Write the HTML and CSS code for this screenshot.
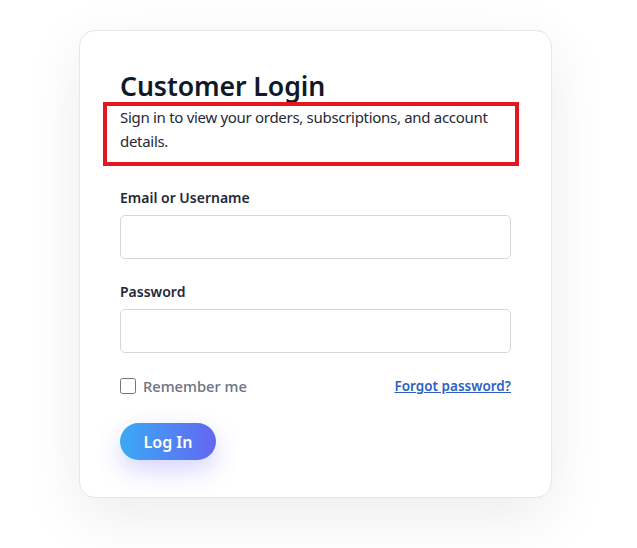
FILE: index.html
```html
<!DOCTYPE html>
<html lang="en">
<head>
    <meta charset="UTF-8">
    <meta name="viewport" content="width=device-width, initial-scale=1.0">
    <title>Customer Login</title>
    <link rel="stylesheet" href="styles.css">
</head>
<body>
    <div class="page">
        <div class="card">
            <h1>Customer Login</h1>
            <p class="intro">Sign in to view your orders, subscriptions, and account details.</p>

            <!-- annotation box drawn over the intro text -->
            <div class="highlight"></div>

            <form class="login-form">
                <div class="form-group">
                    <label for="user">Email or Username</label>
                    <input type="text" id="user">
                </div>
                <div class="form-group">
                    <label for="password">Password</label>
                    <input type="password" id="password">
                </div>

                <div class="form-row">
                    <label class="remember"><input type="checkbox" id="remember"> Remember me</label>
                    <a href="#" class="forgot">Forgot password?</a>
                </div>

                <button type="button" class="btn-login">Log In</button>
            </form>
        </div>
    </div>
</body>
</html>
```

FILE: styles.css
```css
body {
    font-family: "Noto Sans", "Open Sans", sans-serif;
    margin: 0;
    padding: 0;
    background-color: #fff;
    color: #111827;
}
.page {
    display: flex;
    justify-content: center;
    padding: 30px 6px 60px 0;
}
.card {
    position: relative;
    box-sizing: border-box;
    width: 473px;
    background: #fff;
    border: 1px solid #e6e7ea;
    border-radius: 16px;
    box-shadow: 0 18px 60px rgba(0, 0, 0, 0.08);
    padding: 38px 40px 37px;
}
h1 {
    font-size: 26.7px;
    font-weight: 600;
    line-height: 1.25;
    letter-spacing: -0.1px;
    margin: 0 0 3px;
    color: #111827;
}
.intro {
    font-size: 15px;
    line-height: 24px;
    letter-spacing: -0.3px;
    margin: 0 0 35px;
    color: #1f2937;
}
.highlight {
    position: absolute;
    left: 23px;
    top: 71px;
    width: 416px;
    height: 64px;
    box-sizing: border-box;
    border: 4px solid #e3171f;
}
.form-group {
    margin-bottom: 23px;
}
.form-group label {
    display: block;
    font-size: 14px;
    font-weight: 600;
    color: #1f2937;
    margin-bottom: 8px;
}
.form-group input {
    display: block;
    box-sizing: border-box;
    width: 100%;
    height: 44px;
    padding: 10px 12px;
    border: 1px solid #d4d6da;
    border-radius: 5px;
    font-size: 15px;
}
.form-row {
    display: flex;
    justify-content: space-between;
    align-items: center;
    margin-top: 22px;
}
.remember {
    display: flex;
    align-items: center;
    gap: 7px;
    font-size: 14.7px;
    font-weight: 500;
    color: #6b7280;
}
.remember input {
    width: 16px;
    height: 16px;
    margin: 0;
}
.forgot {
    font-size: 13.5px;
    font-weight: 600;
    color: #2f5fc4;
}
.btn-login {
    margin-top: 27px;
    width: 96px;
    height: 37px;
    border: none;
    border-radius: 19px;
    background: linear-gradient(90deg, #3aa9f5, #6467f0);
    color: #fff;
    font-family: inherit;
    font-size: 16px;
    font-weight: 600;
    cursor: pointer;
    box-shadow: 0 10px 24px rgba(99, 102, 241, 0.28);
}
```
